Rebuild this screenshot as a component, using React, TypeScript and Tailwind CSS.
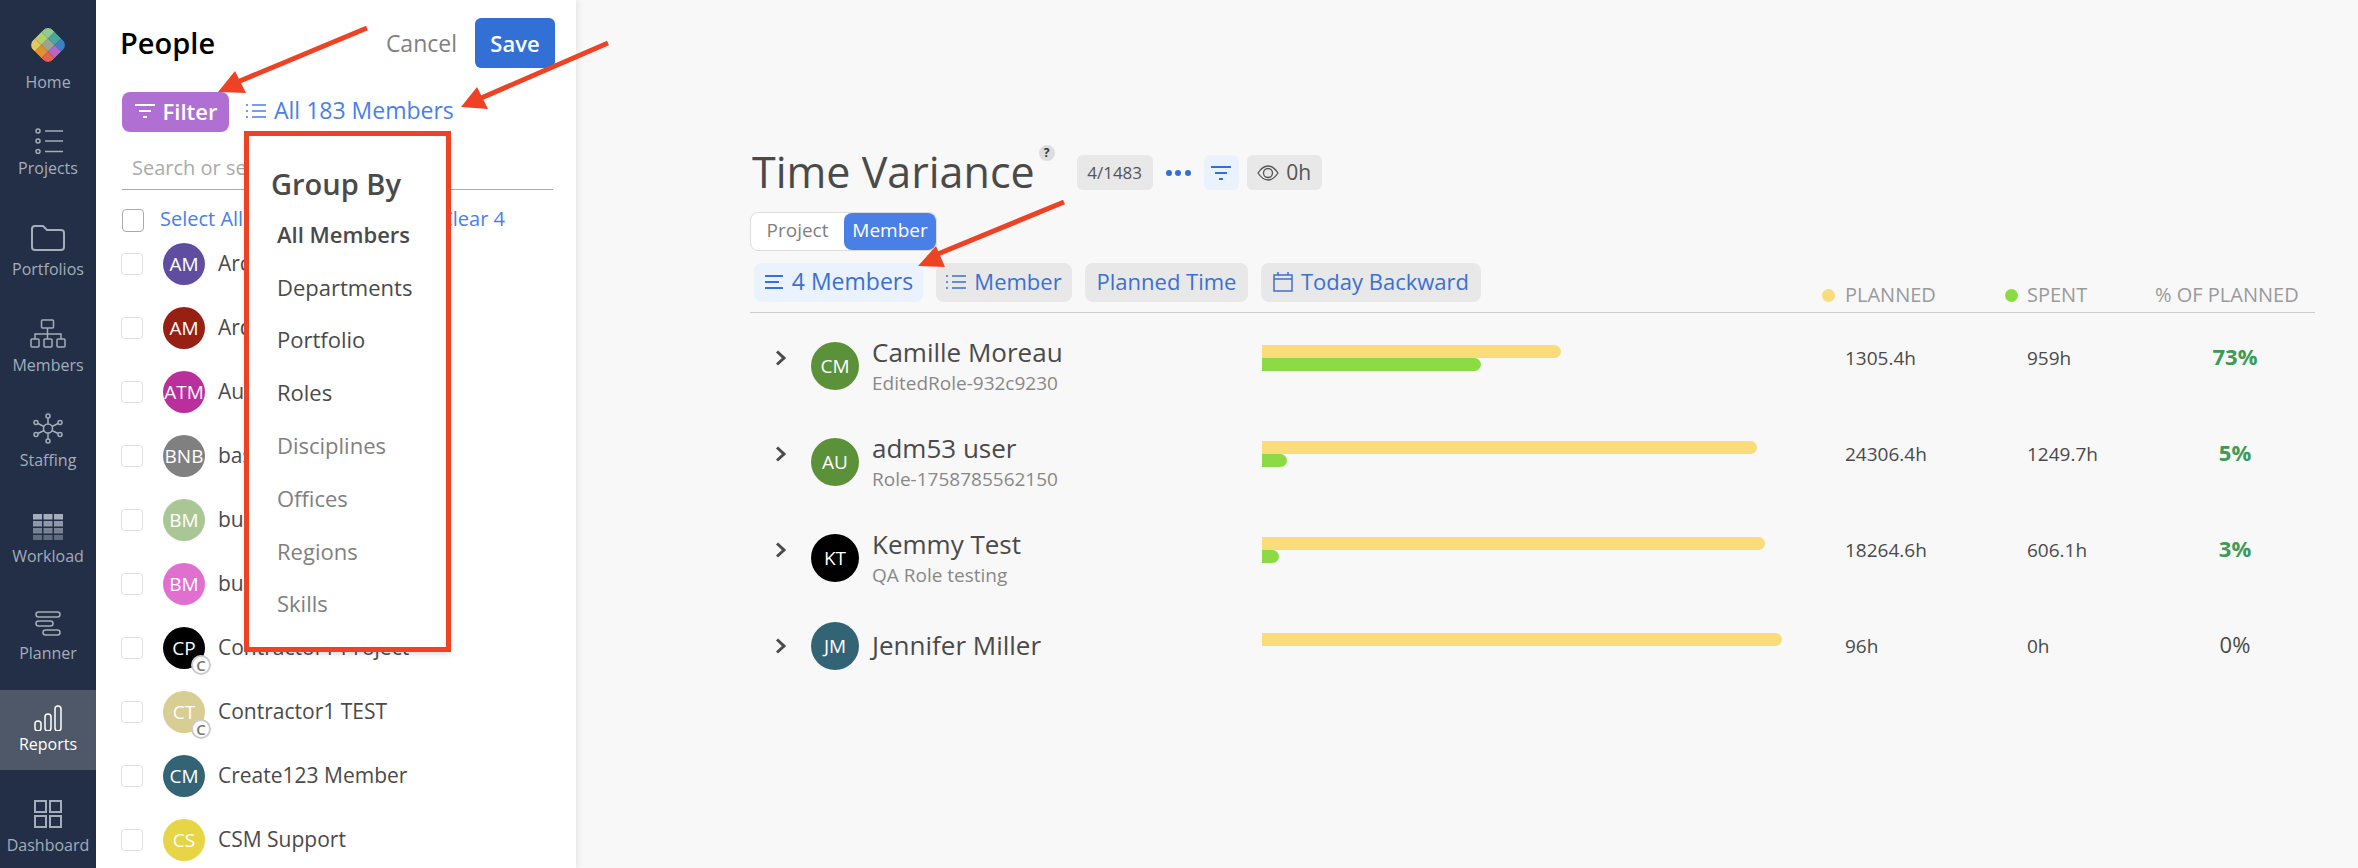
import React from 'react';

const NavIcon = ({ name }: { name: string }) => {
  const stroke = name === 'Reports' ? '#ffffff' : '#a4adb9';
  if (name === 'Home') {
    const colors = [
      ['#8ecb93', '#4da49e', '#3a82c4'],
      ['#b5cf6a', '#9aa694', '#b865c9'],
      ['#e3c763', '#e09232', '#e8604f'],
    ];
    return (
      <svg width="40" height="40" viewBox="0 0 40 40">
        <defs>
          <clipPath id="logo-clip">
            <rect x="-14" y="-14" width="28" height="28" rx="7" />
          </clipPath>
        </defs>
        <g transform="translate(20 20) rotate(45)" clipPath="url(#logo-clip)">
          {colors.map((row, r) =>
            row.map((c, k) => (
              <rect key={`${r}-${k}`} x={-14 + k * 9.34} y={-14 + r * 9.34} width="9.34" height="9.34" fill={c} />
            )),
          )}
        </g>
      </svg>
    );
  }
  if (name === 'Projects') {
    return (
      <svg width="30" height="26" viewBox="0 0 30 26" fill="none" stroke={stroke} strokeWidth="1.5">
        <circle cx="5" cy="3" r="2" />
        <circle cx="5" cy="13" r="2" />
        <circle cx="5" cy="23.5" r="2" />
        <path d="M12 3h19M12 13h19M12 23.5h19" />
      </svg>
    );
  }
  if (name === 'Portfolios') {
    return (
      <svg width="36" height="28" viewBox="0 0 36 28" fill="none" stroke={stroke} strokeWidth="2">
        <path d="M2 5a3 3 0 0 1 3-3h8l4 4h14a3 3 0 0 1 3 3v14a3 3 0 0 1-3 3H5a3 3 0 0 1-3-3z" />
      </svg>
    );
  }
  if (name === 'Members') {
    return (
      <svg width="36" height="29" viewBox="0 0 36 29" fill="none" stroke={stroke} strokeWidth="1.5">
        <rect x="11.5" y="1" width="12" height="8" rx="1" />
        <rect x="1" y="20" width="8" height="8" rx="1" />
        <rect x="14" y="20" width="8" height="8" rx="1" />
        <rect x="27" y="20" width="8" height="8" rx="1" />
        <path d="M17.5 9v11M5 20v-5h26v5" />
      </svg>
    );
  }
  if (name === 'Staffing') {
    return (
      <svg width="30" height="31" viewBox="0 0 30 31" fill="none" stroke={stroke} strokeWidth="1.5">
        <circle cx="15" cy="15.5" r="4.5" />
        <circle cx="15" cy="3" r="2" />
        <circle cx="15" cy="28" r="2" />
        <circle cx="3" cy="9.5" r="2" />
        <circle cx="27" cy="9.5" r="2" />
        <circle cx="3" cy="21.5" r="2" />
        <circle cx="27" cy="21.5" r="2" />
        <path d="M15 5v6M15 20v6M5 10.5l6 3M25 10.5l-6 3M5 20.5l6-3M25 20.5l-6-3" />
      </svg>
    );
  }
  if (name === 'Workload') {
    return (
      <svg width="30" height="26" viewBox="0 0 30 26" fill="#a4adb9">
        {[0, 1, 2, 3].map((r) =>
          [0, 1, 2].map((k) => (
            <rect key={`${r}-${k}`} x={k * 10.5} y={r * 7} width="9" height="5.5" opacity={1 - r * 0.17} />
          )),
        )}
      </svg>
    );
  }
  if (name === 'Planner') {
    return (
      <svg width="26" height="26" viewBox="0 0 26 26" fill="none" stroke={stroke} strokeWidth="1.5">
        <rect x="1" y="1" width="24" height="5" rx="2.5" />
        <rect x="1" y="10" width="17" height="5" rx="2.5" />
        <rect x="8" y="19" width="17" height="5" rx="2.5" />
      </svg>
    );
  }
  if (name === 'Reports') {
    return (
      <svg width="28" height="26" viewBox="0 0 28 26" fill="none" stroke={stroke} strokeWidth="1.5">
        <rect x="1" y="16" width="6" height="10" rx="3" />
        <rect x="11" y="9" width="6" height="17" rx="3" />
        <rect x="21" y="1" width="6" height="25" rx="3" />
      </svg>
    );
  }
  return (
    <svg width="28" height="28" viewBox="0 0 28 28" fill="none" stroke={stroke} strokeWidth="2">
      <rect x="1" y="1" width="11" height="11" />
      <rect x="16" y="1" width="11" height="11" />
      <rect x="1" y="16" width="11" height="11" />
      <rect x="16" y="16" width="11" height="11" />
    </svg>
  );
};

const navItems = [
  { name: 'Home', cls: 'pt-[25px]', gap: 'gap-[6px]', h: 'h-[40px]' },
  { name: 'Projects', cls: 'pt-[35px]', gap: 'gap-[3px]', h: 'h-[26px]' },
  { name: 'Portfolios', cls: 'pt-[45px]', gap: 'gap-[6px]', h: 'h-[28px]' },
  { name: 'Members', cls: 'pt-[39px]', gap: 'gap-[6px]', h: 'h-[29px]' },
  { name: 'Staffing', cls: 'pt-[37px]', gap: 'gap-[6px]', h: 'h-[30px]' },
  { name: 'Workload', cls: 'pt-[43px]', gap: 'gap-[5px]', h: 'h-[26px]' },
  { name: 'Planner', cls: 'pt-[45px]', gap: 'gap-[6px]', h: 'h-[24px]' },
  { name: 'Reports', cls: 'mt-[26px] pt-[15px] h-[80px] bg-[#4f5868] text-white', gap: 'gap-[2px]', h: 'h-[26px]' },
  { name: 'Dashboard', cls: 'pt-[30px]', gap: 'gap-[6px]', h: 'h-[28px]' },
];

const people = [
  { initials: 'AM', color: 'bg-[#5f4ea0]', name: 'Archer Mason' },
  { initials: 'AM', color: 'bg-[#962012]', name: 'Arden Moss' },
  { initials: 'ATM', color: 'bg-[#b92f9c]', name: 'Autumn Team Member' },
  { initials: 'BNB', color: 'bg-[#808080]', name: 'base Nora Bell' },
  { initials: 'BM', color: 'bg-[#a9c795]', name: 'burke Manager' },
  { initials: 'BM', color: 'bg-[#e06fcf]', name: 'burns Manager' },
  { initials: 'CP', color: 'bg-black', name: 'Contractor1 Project', contractor: true },
  { initials: 'CT', color: 'bg-[#d8cd92]', name: 'Contractor1 TEST', contractor: true },
  { initials: 'CM', color: 'bg-[#336475]', name: 'Create123 Member' },
  { initials: 'CS', color: 'bg-[#e8d546]', name: 'CSM Support' },
];

const groups = [
  { label: 'All Members', cls: 'font-semibold text-[#4a4a4a]' },
  { label: 'Departments', cls: 'text-[#4a4a4a]' },
  { label: 'Portfolio', cls: 'text-[#4a4a4a]' },
  { label: 'Roles', cls: 'text-[#4a4a4a]' },
  { label: 'Disciplines', cls: 'text-[#808080]' },
  { label: 'Offices', cls: 'text-[#808080]' },
  { label: 'Regions', cls: 'text-[#808080]' },
  { label: 'Skills', cls: 'text-[#808080]' },
];

const rows = [
  { initials: 'CM', color: 'bg-[#5b9138]', name: 'Camille Moreau', role: 'EditedRole-932c9230', planned: 299, spent: 219, plannedText: '1305.4h', spentText: '959h', pct: '73%' },
  { initials: 'AU', color: 'bg-[#5b9138]', name: 'adm53 user', role: 'Role-1758785562150', planned: 495, spent: 25, plannedText: '24306.4h', spentText: '1249.7h', pct: '5%' },
  { initials: 'KT', color: 'bg-black', name: 'Kemmy Test', role: 'QA Role testing', planned: 503, spent: 17, plannedText: '18264.6h', spentText: '606.1h', pct: '3%' },
  { initials: 'JM', color: 'bg-[#336475]', name: 'Jennifer Miller', role: '', planned: 520, spent: 0, plannedText: '96h', spentText: '0h', pct: '0%' },
];

const FilterLines = ({ className }: { className?: string }) => (
  <svg className={className} width="22" height="16" viewBox="0 0 22 16" fill="none" stroke="currentColor" strokeWidth="2">
    <path d="M1 2h20M5 8h12M9 14h4" />
  </svg>
);

const ListLines = ({ className }: { className?: string }) => (
  <svg className={className} width="20" height="16" viewBox="0 0 20 16" fill="none" stroke="currentColor" strokeWidth="1.5">
    <path d="M6 2h14M6 8h14M6 14h14" />
    <path d="M0 2h2M0 8h2M0 14h2" />
  </svg>
);

export default function App() {
  return (
    <div className="relative flex h-[868px] w-full overflow-hidden bg-[#f8f8f8] font-['Open_Sans','Liberation_Sans',sans-serif]">
      {/* Sidebar */}
      <nav className="flex w-24 shrink-0 flex-col bg-[#232f47] text-[#a4adb9]">
        {navItems.map((item) => (
          <div key={item.name} className={`flex flex-col items-center ${item.gap} ${item.cls}`}>
            <div className={`flex items-center justify-center ${item.h}`}>
              <NavIcon name={item.name} />
            </div>
            <span className="text-base leading-[22px]">{item.name}</span>
          </div>
        ))}
      </nav>

      {/* People panel */}
      <aside className="relative w-[480px] shrink-0 overflow-hidden bg-white pl-[25px] pr-[21px] shadow-[2px_0_6px_rgba(0,0,0,0.08)]">
        <div className="mt-[18px] flex h-[50px] items-center justify-between">
          <h2 className="-ml-[1px] text-[29px] font-semibold text-black">People</h2>
          <div className="flex items-center gap-[18px]">
            <span className="text-[23px] text-[#808080]">Cancel</span>
            <button className="h-[50px] w-20 rounded-md bg-[#3270d5] text-[22px] font-semibold text-white">Save</button>
          </div>
        </div>

        <div className="ml-[1px] mt-[24px] flex h-10 items-center gap-[17px]">
          <button className="flex h-10 w-[107px] items-center justify-center gap-[7px] rounded-lg bg-[#b06fd3] pb-[2px] text-[22px] font-semibold text-white">
            <FilterLines />
            Filter
          </button>
          <span className="flex items-center gap-2 pb-[3px] text-[23px] font-medium text-[#4a7fe8]">
            <ListLines />
            All 183 Members
          </span>
        </div>

        <div className="ml-[1px] mr-[2px] mt-[14px] h-[44px] border-b border-[#aaaaaa] pl-[10px] text-[20px] leading-[44px] text-[#aaaaaa]">
          Search or select
        </div>

        <div className="mt-[18px] flex h-6 items-center justify-between pr-[50px]">
          <div className="ml-[1px] flex items-center gap-4">
            <div className="h-[23px] w-[22px] rounded border border-[#aaaaaa]" />
            <span className="pb-[2px] text-xl font-medium text-[#4a7fe8]">Select All</span>
          </div>
          <span className="pb-[2px] text-xl font-medium text-[#4a7fe8]">Clear 4</span>
        </div>

        <div className="flex flex-col">
          {people.map((p) => (
            <div key={p.name} className="flex h-16 shrink-0 items-center">
              <div className="h-[22px] w-[22px] rounded border border-[#dedede]" />
              <div className={`relative ml-[20px] flex h-[42px] w-[42px] items-center justify-center rounded-full text-[19px] font-medium text-white ${p.color}`}>
                {p.initials}
                {p.contractor && (
                  <span className="absolute left-[28px] top-[28px] flex h-5 w-5 items-center justify-center rounded-full border-2 border-[#cccccc] bg-white text-[15px] font-semibold leading-none text-[#777777]">
                    C
                  </span>
                )}
              </div>
              <span className="ml-[13px] whitespace-nowrap text-[21px] text-[#4a4a4a]">{p.name}</span>
            </div>
          ))}
        </div>

        {/* Group By menu */}
        <div className="absolute left-[148px] top-[131px] h-[521px] w-[207px] border-[5px] border-[#ee4224] bg-white shadow-md">
          <div className="ml-[22px] mt-[30px] text-[29px] font-semibold leading-[36px] text-[#4a4a4a]">Group By</div>
          <div className="mt-[6px] flex flex-col pl-[28px]">
            {groups.map((g) => (
              <div key={g.label} className={`flex h-[52.8px] items-center text-[22px] ${g.cls}`}>
                {g.label}
              </div>
            ))}
          </div>
        </div>
      </aside>

      {/* Report */}
      <main className="min-w-0 flex-1 pl-[174px] pr-[43px] pt-[145px]">
        <div className="flex items-start">
          <h1 className="mb-[1px] ml-[2px] mt-[2px] text-[43px] font-medium leading-[50px] text-[#4a4a4a]">Time Variance</h1>
          <span className="ml-[4px] flex h-4 w-4 items-center justify-center rounded-full bg-[#dddddd] text-xs font-bold text-[#333333]">?</span>
          <div className="ml-[22px] mt-[10px] flex h-[35px] items-center">
            <span className="flex h-[35px] w-[76px] items-center justify-center rounded-md bg-[#e8e8e8] text-[17px] text-[#555555]">4/1483</span>
            <span className="ml-[13px] flex w-[25px] justify-between">
              <i className="h-[6px] w-[6px] rounded-full bg-[#3270d5]" />
              <i className="h-[6px] w-[6px] rounded-full bg-[#3270d5]" />
              <i className="h-[6px] w-[6px] rounded-full bg-[#3270d5]" />
            </span>
            <span className="ml-[13px] flex h-[35px] w-[35px] items-center justify-center rounded-md bg-[#eaf2fd] text-[#3270d5]">
              <FilterLines />
            </span>
            <span className="ml-2 flex h-[35px] w-[75px] items-center justify-center gap-[7px] rounded-md bg-[#e8e8e8] text-[21px] text-[#555555]">
              <svg width="22" height="16" viewBox="0 0 22 16" fill="none" stroke="#555555" strokeWidth="1.3">
                <path d="M1 8c3-4.500 6-7 10-7s7 2.500 10 7c-3 4.500-6 7-10 7s-7-2.500-10-7z" />
                <circle cx="11" cy="8" r="4.500" />
              </svg>
              0h
            </span>
          </div>
        </div>

        <div className="mt-[14px] flex h-[39px] w-[187px] rounded-lg border border-[#dddddd] bg-white text-[19px]">
          <span className="flex w-[93px] items-center justify-center pb-[2px] text-[#808080]">Project</span>
          <span className="flex flex-1 items-center justify-center rounded-lg bg-[#4a7fe8] pb-[2px] text-white">Member</span>
        </div>

        <div className="mt-[12px] flex items-end justify-between border-b border-[#cccccc] pb-[10px]">
          <div className="ml-[4px] flex h-[39px] gap-[13px] text-[22px] text-[#3a70d0]">
            <span className="flex w-[169px] items-center justify-center gap-2 rounded-lg bg-[#eaf2fd] pb-[2px] text-[23px] font-medium">
              <svg width="20" height="16" viewBox="0 0 20 16" fill="none" stroke="currentColor" strokeWidth="2">
                <path d="M1 2h18M1 8h14M1 14h18" />
              </svg>
              4 Members
            </span>
            <span className="flex w-[136px] items-center justify-center gap-2 rounded-lg bg-[#e8e8e8] pb-[2px]">
              <ListLines />
              Member
            </span>
            <span className="flex w-[163px] items-center justify-center rounded-lg bg-[#e8e8e8] pb-[2px]">Planned Time</span>
            <span className="flex w-[220px] items-center justify-center gap-2 rounded-lg bg-[#e8e8e8] pb-[2px]">
              <svg width="20" height="20" viewBox="0 0 20 20" fill="none" stroke="currentColor" strokeWidth="1.5">
                <rect x="1" y="3" width="18" height="16" />
                <path d="M1 7h18M5 0v3M15 0v3" />
              </svg>
              Today Backward
            </span>
          </div>
          <div className="flex text-[20px] leading-[14px] text-[#9a9a9a]">
            <div className="flex w-[183px] items-center gap-[10px]">
              <i className="h-[13px] w-[13px] rounded-full bg-[#fbdc7a]" />
              PLANNED
            </div>
            <div className="flex w-[150px] items-center gap-[9px]">
              <i className="h-[13px] w-[13px] rounded-full bg-[#8cdb44]" />
              SPENT
            </div>
            <div className="w-[160px]">% OF PLANNED</div>
          </div>
        </div>

        <div className="-mt-[3px] flex flex-col">
          {rows.map((r) => (
            <div key={r.name} className="grid h-24 grid-cols-[512px_583px_182px_128px_160px] items-center">
              <div className="flex items-center pl-[24px]">
                <svg width="13" height="16" viewBox="0 0 13 16" fill="none" stroke="#4a4a4a" strokeWidth="3">
                  <path d="M3 1.500 10 8l-7 6.500" />
                </svg>
                <div className={`ml-[24px] flex items-center ${r.role ? 'mt-4' : ''}`}>
                  <div className={`flex h-12 w-12 items-center justify-center rounded-full text-[19px] text-white ${r.color}`}>{r.initials}</div>
                  <div className="ml-[13px] flex flex-col gap-[3px]">
                    <span className="pb-[2px] text-[26px] font-medium leading-[28px] text-[#4a4a4a]">{r.name}</span>
                    {r.role && <span className="text-[19px] leading-6 text-[#888888]">{r.role}</span>}
                  </div>
                </div>
              </div>
              <div className="flex h-[26px] flex-col">
                <div className="h-[13px] rounded-r-full bg-[#fbdc7a]" style={{ width: r.planned }} />
                {r.spent > 0 && <div className="h-[13px] rounded-r-full bg-[#8cdb44]" style={{ width: r.spent }} />}
              </div>
              <span className="text-[19px] font-medium text-[#4a4a4a]">{r.plannedText}</span>
              <span className="text-[19px] font-medium text-[#4a4a4a]">{r.spentText}</span>
              <span className={`pb-[3px] text-center text-[22px] ${r.pct === '0%' ? 'font-medium text-[#4a4a4a]' : 'font-bold text-[#3d9a58]'}`}>{r.pct}</span>
            </div>
          ))}
        </div>
      </main>

      {/* Annotation arrows */}
      <svg className="pointer-events-none absolute left-0 top-0" width="2358" height="868" fill="#ee4224" stroke="#ee4224">
        <path d="M367 28 228 86" strokeWidth="5" />
        <path d="M218 92 235 71 246 93z" stroke="none" />
        <path d="M608 43 472 102" strokeWidth="5" />
        <path d="M461 107 477 87 488 109z" stroke="none" />
        <path d="M1064 202 928 258" strokeWidth="5" />
        <path d="M918 266 936 246 945 267z" stroke="none" />
      </svg>
    </div>
  );
}
